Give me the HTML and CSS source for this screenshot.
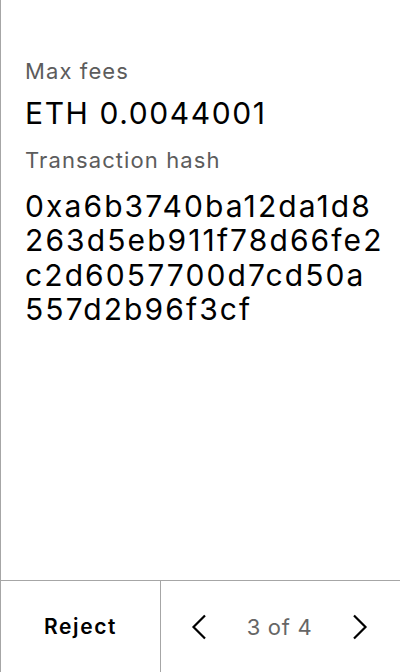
FILE: index.html
```html
<!DOCTYPE html>
<html>
<head>
<meta charset="utf-8">
<link rel="stylesheet" href="styles.css">
</head>
<body>
<div class="screen">
  <main class="content">
    <div class="label">Max fees</div>
    <div class="value">ETH 0.0044001</div>
    <div class="label label-second">Transaction hash</div>
    <div class="value hash">0xa6b3740ba12da1d8<br>263d5eb911f78d66fe2<br>c2d6057700d7cd50a<br>557d2b96f3cf</div>
  </main>
  <footer class="footer">
    <div class="reject">Reject</div>
    <div class="pager">
      <svg class="chev" width="16" height="26" viewBox="0 0 16 26"><path d="M14 1.5 L2.5 13 L14 24.5" fill="none" stroke="#000" stroke-width="2.2"/></svg>
      <span class="count">3 of 4</span>
      <svg class="chev" width="16" height="26" viewBox="0 0 16 26"><path d="M2 1.5 L13.5 13 L2 24.5" fill="none" stroke="#000" stroke-width="2.2"/></svg>
    </div>
  </footer>
</div>
</body>
</html>
```
FILE: styles.css
```css
html, body {
  margin: 0;
  padding: 0;
  background: #fff;
}
body {
  font-family: Inter, "Noto Sans", sans-serif;
  color: #000;
}
.screen {
  width: 400px;
  height: 672px;
  box-sizing: border-box;
  border-left: 1px solid #a6a6a6;
  display: flex;
  flex-direction: column;
}
.content {
  flex: 1;
  padding: 57px 24px 0 24px;
}
.label {
  font-size: 22px;
  line-height: 28px;
  letter-spacing: 1.1px;
  color: #5c5c5c;
}
.label-second {
  margin-top: 16px;
}
.value {
  font-size: 30px;
  line-height: 34px;
  letter-spacing: 1.6px;
  color: #000;
  margin-top: 11px;
}
.hash {
  line-height: 34.5px;
  letter-spacing: 2.1px;
  margin-top: 14.5px;
}
.footer {
  height: 92px;
  box-sizing: border-box;
  border-top: 1px solid #a6a6a6;
  display: flex;
}
.reject {
  width: 159px;
  border-right: 1px solid #a6a6a6;
  display: flex;
  align-items: center;
  justify-content: center;
  font-size: 21px;
  font-weight: 600;
  letter-spacing: 1.6px;
}
.pager {
  flex: 1;
  display: flex;
  align-items: center;
  justify-content: space-between;
  padding: 0 32px 0 30px;
}
.count {
  font-size: 22px;
  letter-spacing: 0.7px;
  color: #666;
}
.chev {
  display: block;
}
```
